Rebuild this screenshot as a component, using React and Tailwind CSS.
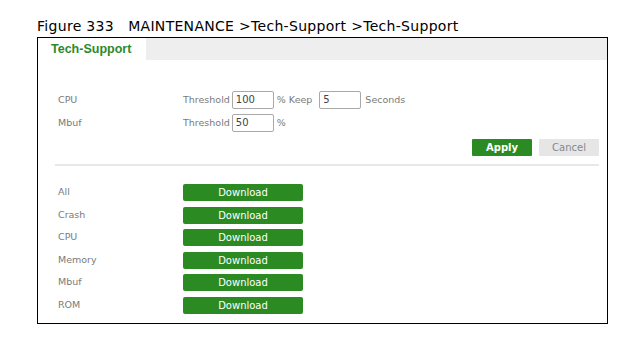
import React from "react";

const downloads = ["All", "Crash", "CPU", "Memory", "Mbuf", "ROM"];

const Field = ({ value }) => (
  <div className="w-[42px] h-[18px] border border-[#a9a9a9] rounded-[2px] px-[3px] text-[10px] leading-[16px] text-[#444]">
    {value}
  </div>
);

const App = () => {
  return (
    <div className="w-[632px] h-[341px] bg-white pl-[37px] pt-[16px] font-['DejaVu_Sans',sans-serif]">
      {/* caption */}
      <div className="h-[21px] text-[14px] leading-[21px] text-black whitespace-nowrap tracking-[0.3px]">
        Figure 333&nbsp;&nbsp; MAINTENANCE &gt;Tech-Support &gt;Tech-Support
      </div>

      <div className="w-[571px] h-[287px] border border-black text-[#7a7a7a] text-[9.5px]">
        {/* tab bar */}
        <div className="h-[22px] bg-[#eeeeee] flex">
          <div className="w-[108px] h-full bg-white px-[13px] text-[12.5px] leading-[23px] font-bold text-[#2b8a2b] whitespace-nowrap font-['Liberation_Sans',sans-serif]">
            Tech-Support
          </div>
        </div>

        <div className="pl-[17px] pr-[8px] pt-[31px]">
          {/* thresholds */}
          <div className="flex flex-col gap-[5px] pl-[3px]">
            <div className="flex items-center h-[18px]">
              <div className="w-[125px]">CPU</div>
              <span className="mr-[2px]">Threshold</span>
              <Field value="100" />
              <span className="ml-[3px] mr-[7px]">% Keep</span>
              <Field value="5" />
              <span className="ml-[4px]">Seconds</span>
            </div>
            <div className="flex items-center h-[18px]">
              <div className="w-[125px]">Mbuf</div>
              <span className="mr-[2px]">Threshold</span>
              <Field value="50" />
              <span className="ml-[3px]">%</span>
            </div>
          </div>

          {/* actions */}
          <div className="flex justify-end gap-[7px] mt-[7px]">
            <button className="w-[60px] h-[17px] bg-[#2c8a22] text-white text-[10px] font-bold rounded-[1px]">
              Apply
            </button>
            <button className="w-[60px] h-[17px] bg-[#e6e6e6] text-[#888] text-[10px] rounded-[1px]">
              Cancel
            </button>
          </div>

          <div className="h-[2px] bg-[#e8e8e8] mt-[8px]" />

          {/* downloads */}
          <div className="flex flex-col gap-[5.5px] mt-[18px] pl-[3px]">
            {downloads.map((name) => (
              <div key={name} className="flex items-center h-[17px]">
                <div className="w-[125px]">{name}</div>
                <button className="w-[120px] h-[17px] bg-[#2c8a22] text-white text-[10px] rounded-[2px]">
                  Download
                </button>
              </div>
            ))}
          </div>
        </div>
      </div>
    </div>
  );
};

export default App;
